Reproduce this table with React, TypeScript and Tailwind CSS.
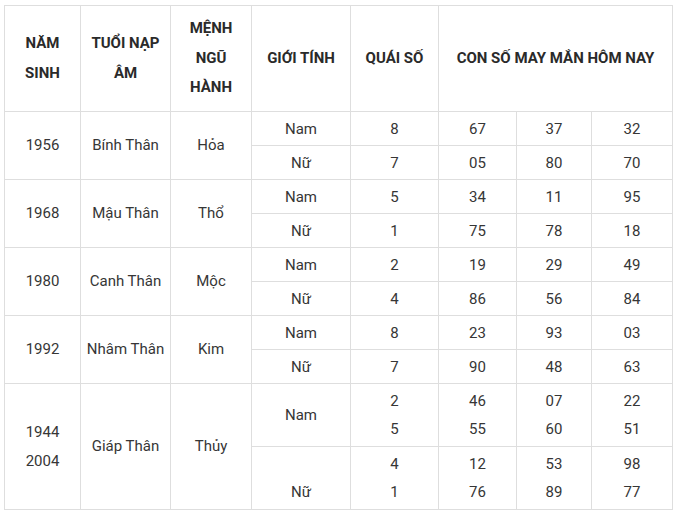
const rows = [
  {
    year: ["1956"],
    tuoi: "Bính Thân",
    menh: "Hỏa",
    sub: [
      { gender: ["Nam"], quai: ["8"], nums: [["67"], ["37"], ["32"]] },
      { gender: ["Nữ"], quai: ["7"], nums: [["05"], ["80"], ["70"]] },
    ],
  },
  {
    year: ["1968"],
    tuoi: "Mậu Thân",
    menh: "Thổ",
    sub: [
      { gender: ["Nam"], quai: ["5"], nums: [["34"], ["11"], ["95"]] },
      { gender: ["Nữ"], quai: ["1"], nums: [["75"], ["78"], ["18"]] },
    ],
  },
  {
    year: ["1980"],
    tuoi: "Canh Thân",
    menh: "Mộc",
    sub: [
      { gender: ["Nam"], quai: ["2"], nums: [["19"], ["29"], ["49"]] },
      { gender: ["Nữ"], quai: ["4"], nums: [["86"], ["56"], ["84"]] },
    ],
  },
  {
    year: ["1992"],
    tuoi: "Nhâm Thân",
    menh: "Kim",
    sub: [
      { gender: ["Nam"], quai: ["8"], nums: [["23"], ["93"], ["03"]] },
      { gender: ["Nữ"], quai: ["7"], nums: [["90"], ["48"], ["63"]] },
    ],
  },
  {
    year: ["1944", "2004"],
    tuoi: "Giáp Thân",
    menh: "Thủy",
    sub: [
      {
        gender: ["Nam"],
        quai: ["2", "5"],
        nums: [["46", "55"], ["07", "60"], ["22", "51"]],
      },
      {
        gender: ["\u00a0", "Nữ"],
        quai: ["4", "1"],
        nums: [["12", "76"], ["53", "89"], ["98", "77"]],
      },
    ],
  },
];

const td = "border border-[#dedede] text-center align-middle p-0";

function Lines({ items, tall }: { items: string[]; tall?: boolean }) {
  return (
    <>
      {items.map((t, i) => (
        <div key={i} className={tall ? "leading-[29px]" : "leading-[28px]"}>
          {t}
        </div>
      ))}
    </>
  );
}

export default function App() {
  return (
    <div
      className="min-h-[517px] bg-white pl-[4px] pt-[5px]"
      style={{ fontFamily: "Roboto, 'Liberation Sans', sans-serif" }}
    >
      <table className="w-[668px] table-fixed border-collapse text-[15px] text-[#363636]">
        <colgroup>
          <col className="w-[76px]" />
          <col className="w-[90px]" />
          <col className="w-[81px]" />
          <col className="w-[99px]" />
          <col className="w-[88px]" />
          <col className="w-[78px]" />
          <col className="w-[75px]" />
          <col className="w-[81px]" />
        </colgroup>
        <thead>
          <tr className="h-[106px] font-bold text-[#2a2a2a] leading-[29.5px]">
            <th className={td}>
              NĂM
              <br />
              SINH
            </th>
            <th className={td}>
              TUỔI NẠP
              <br />
              ÂM
            </th>
            <th className={td}>
              MỆNH
              <br />
              NGŨ
              <br />
              HÀNH
            </th>
            <th className={td}>GIỚI TÍNH</th>
            <th className={td}>QUÁI SỐ</th>
            <th className={td} colSpan={3}>
              CON SỐ MAY MẮN HÔM NAY
            </th>
          </tr>
        </thead>
        <tbody>
          {rows.map((r, ri) =>
            r.sub.map((s, si) => {
              const multi = s.quai.length > 1;
              return (
                <tr
                  key={`${ri}-${si}`}
                  className={multi ? "h-[63px]" : "h-[34px]"}
                >
                  {si === 0 && (
                    <>
                      <td className={td} rowSpan={2}>
                        <Lines items={r.year} tall />
                      </td>
                      <td className={td} rowSpan={2}>
                        {r.tuoi}
                      </td>
                      <td className={td} rowSpan={2}>
                        {r.menh}
                      </td>
                    </>
                  )}
                  <td className={td}>
                    <Lines items={s.gender} />
                  </td>
                  <td className={td}>
                    <Lines items={s.quai} />
                  </td>
                  {s.nums.map((n, ni) => (
                    <td key={ni} className={td}>
                      <Lines items={n} />
                    </td>
                  ))}
                </tr>
              );
            })
          )}
        </tbody>
      </table>
    </div>
  );
}
